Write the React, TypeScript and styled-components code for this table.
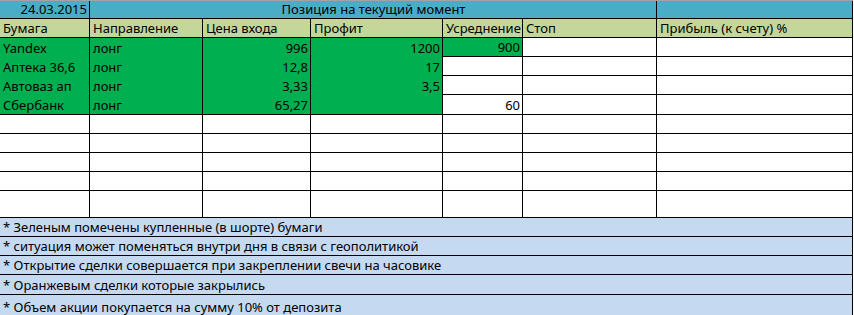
import React from 'react';
import styled, { createGlobalStyle } from 'styled-components';

const GlobalStyle = createGlobalStyle`
  html, body {
    margin: 0;
    padding: 0;
    background: #ffffff;
  }
  body {
    font-family: "Noto Sans", "Open Sans", sans-serif;
    color: #000000;
  }
`;

const COLS = '90px 113px 108px 132px 80px 134px 196px';

const Sheet = styled.div`
  width: 853px;
  border-top: 1px solid #a3a3a3;
  font-size: 13px;
`;

const Row = styled.div<{ $h: number }>`
  display: grid;
  grid-template-columns: ${COLS};
  height: ${(p) => p.$h}px;
`;

type Fill = 'teal' | 'olive' | 'green' | 'white' | 'blue';

const fills: Record<Fill, string> = {
  teal: '#4bacc6',
  olive: '#c4d79b',
  green: '#00b050',
  white: '#ffffff',
  blue: '#c5d9f1',
};

const Cell = styled.div<{
  $fill: Fill;
  $right?: boolean;
  $center?: boolean;
  $open?: boolean;
  $span?: number;
}>`
  box-sizing: border-box;
  display: flex;
  align-items: flex-end;
  justify-content: ${(p) => (p.$right ? 'flex-end' : p.$center ? 'center' : 'flex-start')};
  padding: 0 2px 1px 3px;
  background: ${(p) => fills[p.$fill]};
  border-right: 1px solid #000;
  border-bottom: ${(p) => (p.$open ? 'none' : '1px solid #000')};
  grid-column: span ${(p) => p.$span || 1};
  white-space: nowrap;
  line-height: 16px;
`;

const Note = styled(Cell)`
  grid-column: 1 / -1;
  padding-left: 3px;
`;

const headers = ['Бумага', 'Направление', 'Цена входа', 'Профит', 'Усреднение', 'Стоп', 'Прибыль (к счету) %'];

type DataCell = { v?: string; fill: Fill; open?: boolean; right?: boolean };

const dataRows: { h: number; cells: DataCell[] }[] = [
  {
    h: 19,
    cells: [
      { v: 'Yandex', fill: 'green', open: true },
      { v: 'лонг', fill: 'green', open: true },
      { v: '996', fill: 'green', open: true, right: true },
      { v: '1200', fill: 'green', open: true, right: true },
      { v: '900', fill: 'green', right: true },
      { fill: 'white' },
      { fill: 'white' },
    ],
  },
  {
    h: 19,
    cells: [
      { v: 'Аптека 36,6', fill: 'green', open: true },
      { v: 'лонг', fill: 'green', open: true },
      { v: '12,8', fill: 'green', open: true, right: true },
      { v: '17', fill: 'green', open: true, right: true },
      { fill: 'white' },
      { fill: 'white' },
      { fill: 'white' },
    ],
  },
  {
    h: 19,
    cells: [
      { v: 'Автоваз ап', fill: 'green', open: true },
      { v: 'лонг', fill: 'green', open: true },
      { v: '3,33', fill: 'green', open: true, right: true },
      { v: '3,5', fill: 'green', open: true, right: true },
      { fill: 'white' },
      { fill: 'white' },
      { fill: 'white' },
    ],
  },
  {
    h: 20,
    cells: [
      { v: 'Сбербанк', fill: 'green' },
      { v: 'лонг', fill: 'green' },
      { v: '65,27', fill: 'green', right: true },
      { fill: 'green' },
      { v: '60', fill: 'white', right: true },
      { fill: 'white' },
      { fill: 'white' },
    ],
  },
];

const emptyHeights = [19, 19, 19, 19, 27];

const notes: { text: string; h: number }[] = [
  { text: '* Зеленым помечены купленные (в шорте) бумаги', h: 19 },
  { text: '* ситуация может поменяться внутри дня в связи с геополитикой', h: 19 },
  { text: '* Открытие сделки совершается при закреплении свечи на часовике', h: 19 },
  { text: '* Оранжевым сделки которые закрылись', h: 20 },
  { text: '* Объем акции покупается на сумму 10% от депозита', h: 22 },
];

export default function App() {
  return (
    <>
      <GlobalStyle />
      <Sheet>
        <Row $h={18}>
          <Cell $fill="teal" $right>24.03.2015</Cell>
          <Cell $fill="teal" $center $span={5}>Позиция на текущий момент</Cell>
          <Cell $fill="teal" />
        </Row>
        <Row $h={19}>
          {headers.map((h) => (
            <Cell key={h} $fill="olive">{h}</Cell>
          ))}
        </Row>
        {dataRows.map((r, i) => (
          <Row key={i} $h={r.h}>
            {r.cells.map((c, j) => (
              <Cell key={j} $fill={c.fill} $open={c.open} $right={c.right}>
                {c.v}
              </Cell>
            ))}
          </Row>
        ))}
        {emptyHeights.map((h, i) => (
          <Row key={'e' + i} $h={h}>
            {headers.map((_, j) => (
              <Cell key={j} $fill="white" />
            ))}
          </Row>
        ))}
        {notes.map((n) => (
          <Row key={n.text} $h={n.h}>
            <Note $fill="blue">{n.text}</Note>
          </Row>
        ))}
      </Sheet>
    </>
  );
}
